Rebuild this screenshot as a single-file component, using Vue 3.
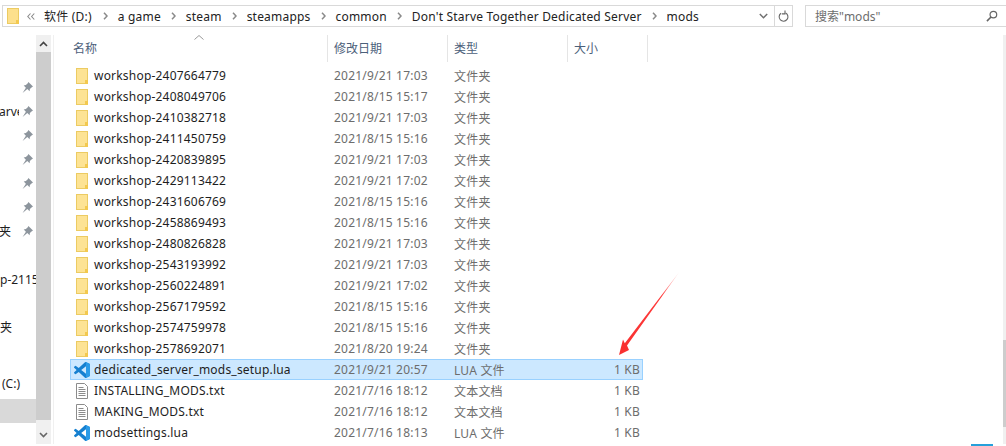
<script setup>
const folders = [
  ['workshop-2407664779', '2021/9/21 17:03'],
  ['workshop-2408049706', '2021/8/15 15:17'],
  ['workshop-2410382718', '2021/9/21 17:03'],
  ['workshop-2411450759', '2021/8/15 15:16'],
  ['workshop-2420839895', '2021/9/21 17:03'],
  ['workshop-2429113422', '2021/9/21 17:02'],
  ['workshop-2431606769', '2021/8/15 15:16'],
  ['workshop-2458869493', '2021/8/15 15:16'],
  ['workshop-2480826828', '2021/9/21 17:03'],
  ['workshop-2543193992', '2021/9/21 17:03'],
  ['workshop-2560224891', '2021/9/21 17:02'],
  ['workshop-2567179592', '2021/8/15 15:16'],
  ['workshop-2574759978', '2021/8/15 15:16'],
  ['workshop-2578692071', '2021/8/20 19:24']
].map(([name, date]) => ({ name, date, type: '文件夹', size: '', icon: 'folder' }))

const files = [
  { name: 'dedicated_server_mods_setup.lua', date: '2021/9/21 20:57', type: 'LUA 文件', size: '1 KB', icon: 'vscode', selected: true },
  { name: 'INSTALLING_MODS.txt', date: '2021/7/16 18:12', type: '文本文档', size: '1 KB', icon: 'text' },
  { name: 'MAKING_MODS.txt', date: '2021/7/16 18:12', type: '文本文档', size: '1 KB', icon: 'text' },
  { name: 'modsettings.lua', date: '2021/7/16 18:13', type: 'LUA 文件', size: '1 KB', icon: 'vscode' }
]

const rows = [...folders, ...files]
const crumbs = ['a game', 'steam', 'steamapps', 'common', "Don't Starve Together Dedicated Server", 'mods']
const columns = [
  { label: '修改日期', width: 120 },
  { label: '类型', width: 120 },
  { label: '大小', width: 80 }
]
const navItems = ['', 'arve', '', '', '', '', '夹']
</script>

<template>
  <div class="window">
    <header class="toolbar">
      <div class="address">
        <svg class="address__folder" width="12" height="16" viewBox="0 0 12 16">
          <rect x="0.5" y="0.5" width="11" height="15" fill="#fde08c" stroke="#eccb62" />
          <rect x="9" y="12" width="3" height="4" fill="#f3c94f" />
        </svg>
        <svg class="chevrons" width="8" height="7" viewBox="0 0 8 7">
          <path d="M3.500.5.800 3.500l2.700 3M7.300.5 4.600 3.500l2.700 3" fill="none" stroke="#8a8a8a" stroke-width="1.100" />
        </svg>
        <span class="crumb crumb--first">软件 (D:)</span>
        <template v-for="crumb in crumbs" :key="crumb">
          <svg class="sep" width="5" height="8" viewBox="0 0 5 8">
            <path d="M1 .8 4 4 1 7.200" fill="none" stroke="#8a8a8a" stroke-width="1.500" />
          </svg>
          <span class="crumb">{{ crumb }}</span>
        </template>
        <span class="address__spacer"></span>
        <svg class="address__drop" width="9" height="6" viewBox="0 0 9 6">
          <path d="M.8 1l3.700 3.700L8.200 1" fill="none" stroke="#707070" stroke-width="1.500" />
        </svg>
        <span class="address__refresh">
          <svg width="11" height="13" viewBox="0 0 11 13">
            <path d="M3 3.200a4.400 4.400 0 1 0 4.600-.3" fill="none" stroke="#666" stroke-width="1.100" />
            <path d="M7 .5v3.400H3.800" fill="none" stroke="#666" stroke-width="1.100" />
          </svg>
        </span>
      </div>
      <div class="search">
        <span>搜索"mods"</span>
        <svg width="12" height="12" viewBox="0 0 13 13">
          <circle cx="8" cy="5" r="3.600" fill="none" stroke="#666" stroke-width="1.300" />
          <path d="M5.400 7.600 1 12" stroke="#666" stroke-width="1.700" />
        </svg>
      </div>
    </header>

    <div class="body">
      <aside class="nav">
        <div class="nav__pane">
          <ul class="nav__pins">
            <li v-for="(item, i) in navItems" :key="i" class="nav__pin">
              <span class="nav__text">{{ item }}</span>
              <svg width="11" height="11" viewBox="0 0 11 11">
                <path d="M6.400 0 11 4.600 9.800 5.200 7.900 7.100 7.600 9.300 5.300 7.100 .6 11 3.900 5.700 1.700 3.400 3.900 3.100 5.800 1.200Z" fill="#8d959d" />
              </svg>
            </li>
          </ul>
          <div class="nav__clip">p-2115</div>
          <div class="nav__clip nav__clip--cn">夹</div>
          <div class="nav__clip nav__clip--drive">(C:)</div>
          <div class="nav__active"></div>
        </div>
        <div class="nav__scroll">
          <span class="nav__arrow">
            <svg width="9" height="6" viewBox="0 0 9 6"><path d="M1 5l3.500-3.500L8 5" fill="none" stroke="#444" stroke-width="1.600" /></svg>
          </span>
          <span class="nav__thumb"></span>
          <span class="nav__arrow nav__arrow--down">
            <svg width="9" height="6" viewBox="0 0 9 6"><path d="M1 1l3.500 3.500L8 1" fill="none" stroke="#666" stroke-width="1.600" /></svg>
          </span>
        </div>
      </aside>

      <main class="list">
        <div class="head">
          <div class="head__col head__col--name">
            <svg class="head__sort" width="10" height="5" viewBox="0 0 10 5"><path d="M.5 4.500 5 .5l4.500 4" fill="none" stroke="#999" /></svg>
            名称
          </div>
          <div v-for="col in columns" :key="col.label" class="head__col" :style="{ width: col.width + 'px' }">{{ col.label }}</div>
        </div>
        <div class="rows">
          <div v-for="row in rows" :key="row.name" class="row" :class="{ 'row--selected': row.selected }">
            <div class="cell cell--name">
              <svg v-if="row.icon === 'folder'" class="icon" width="16" height="16" viewBox="0 0 16 16">
                <rect x="2.500" y="0.500" width="11" height="15" fill="#fde394" stroke="#eccb62" />
                <rect x="11" y="12" width="3" height="4" fill="#f3c94f" />
              </svg>
              <svg v-else-if="row.icon === 'text'" class="icon" width="16" height="16" viewBox="0 0 16 16">
                <path d="M2.500.5h8l3 3v12h-11z" fill="#fff" stroke="#8c8c8c" />
                <path d="M4.500 4.500h5M4.500 6.500h7M4.500 8.500h7M4.500 10.500h7M4.500 12.500h7" stroke="#8c8c8c" />
              </svg>
              <svg v-else class="icon" width="16" height="16" viewBox="0 0 24 24">
                <path d="M23.150 2.587 18.210.21a1.494 1.494 0 0 0-1.705.29l-9.460 8.630-4.120-3.128a.999.999 0 0 0-1.276.057L.327 7.261A1 1 0 0 0 .326 8.740L3.899 12 .326 15.260a1 1 0 0 0 .001 1.479L1.650 17.940a.999.999 0 0 0 1.276.057l4.120-3.128 9.460 8.630a1.492 1.492 0 0 0 1.704.29l4.942-2.377A1.500 1.500 0 0 0 24 20.060V3.939a1.500 1.500 0 0 0-.85-1.352zm-5.146 14.861L10.826 12l7.178-5.448v10.896z" fill="#1680d0" />
                <path d="M18 .1 23.150 2.587A1.500 1.500 0 0 1 24 3.939V20.060a1.500 1.500 0 0 1-.85 1.352L18 23.900V.1Z" fill="#2a9be8" />
              </svg>
              <span class="cell__name">{{ row.name }}</span>
            </div>
            <div class="cell cell--date">{{ row.date }}</div>
            <div class="cell cell--type">{{ row.type }}</div>
            <div class="cell cell--size">{{ row.size }}</div>
          </div>
        </div>
      </main>

      <div class="scroll">
        <span class="scroll__track"></span>
        <span class="scroll__thumb"></span>
        <span class="scroll__end"></span>
      </div>
    </div>

    <footer class="status">
      <span class="status__button"></span>
    </footer>

    <!-- red annotation arrow drawn over the list -->
    <svg class="arrow" width="70" height="90" viewBox="610 268 70 90">
      <defs>
        <linearGradient id="arrow-fade" x1="1" y1="0" x2="0" y2="1">
          <stop offset="0" stop-color="#ff3b3b" stop-opacity="0.05" />
          <stop offset="0.3" stop-color="#ff3b3b" />
          <stop offset="1" stop-color="#f83030" />
        </linearGradient>
      </defs>
      <path d="M680 271 627 345.500 629 350 619 355 623 339.500 624.800 343.200Z" fill="url(#arrow-fade)" />
    </svg>
  </div>
</template>

<style>
html,
body {
  margin: 0;
  background: #fff;
  overflow: hidden;
}
</style>

<style scoped>
.window {
  position: relative;
  width: 1006px;
  height: 446px;
  background: #fff;
  overflow: hidden;
  font-family: "Noto Sans", "Noto Sans CJK SC", sans-serif;
  font-size: 12px;
  color: #1e1e1e;
}

.toolbar {
  display: flex;
  gap: 12px;
  height: 35px;
  padding: 5px 0 0 2px;
  box-sizing: border-box;
}

.address {
  display: flex;
  align-items: center;
  width: 791px;
  height: 22px;
  border: 1px solid #d9d9d9;
  box-sizing: border-box;
  padding-left: 4px;
}

.address__folder {
  margin-right: 8px;
}

.chevrons {
  margin-right: 9px;
}

.crumb {
  color: #222;
  white-space: nowrap;
  letter-spacing: 0.2px;
}

.crumb--first {
  margin-right: 1px;
}

.sep {
  flex: none;
  margin: 0 10px;
}

.address__spacer {
  flex: 1;
}

.address__drop {
  margin-right: 3px;
}

.address__refresh {
  display: flex;
  align-items: center;
  justify-content: center;
  width: 17px;
  height: 100%;
  margin-left: 3px;
  border-left: 1px solid #d9d9d9;
}

.search {
  display: flex;
  align-items: center;
  justify-content: space-between;
  width: 201px;
  height: 22px;
  border: 1px solid #d9d9d9;
  border-right: none;
  box-sizing: border-box;
  padding: 0 8px 0 9px;
  color: #6d6d6d;
}

.body {
  display: flex;
  height: 409px;
}

.nav {
  display: flex;
  width: 54px;
  flex: none;
  border-right: 1px solid #f0f0f0;
  box-sizing: border-box;
}

.nav__pane {
  width: 36px;
  padding-top: 40px;
  overflow: hidden;
}

.nav__pins {
  list-style: none;
  margin: 0;
  padding: 0;
}

.nav__pin {
  display: flex;
  align-items: center;
  justify-content: flex-end;
  height: 24px;
  padding-right: 3px;
}

.nav__text {
  flex: none;
  width: 20px;
  white-space: nowrap;
  overflow: hidden;
  margin-left: -1px;
  margin-right: 3px;
}

.nav__clip {
  white-space: nowrap;
  margin-top: 28px;
  height: 24px;
}

.nav__clip--cn {
  margin-top: 23px;
}

.nav__clip--drive {
  margin-top: 33px;
  padding-left: 2px;
}

.nav__active {
  height: 24px;
  background: #d9d9d9;
}

.nav__scroll {
  display: flex;
  flex-direction: column;
  width: 15px;
  height: 409px;
  background: #f0f0f0;
}

.nav__arrow {
  display: flex;
  align-items: center;
  justify-content: center;
  height: 17px;
}

.nav__arrow--down {
  height: 24px;
  padding-top: 6px;
  box-sizing: border-box;
}

.nav__thumb {
  flex: 1;
  background: #cdcdcd;
}

.list {
  flex: 1;
  min-width: 0;
}

.head {
  display: flex;
  height: 27px;
  color: #4c607a;
}

.head__col {
  position: relative;
  display: flex;
  align-items: center;
  box-sizing: border-box;
  padding-left: 6px;
  padding-bottom: 2px;
  border-right: 1px solid #e5e5e5;
  white-space: nowrap;
}

.head__col--name {
  width: 274px;
  padding-left: 19px;
}

.head__sort {
  position: absolute;
  left: 140px;
  top: 0;
}

.rows {
  padding: 3px 0 0 16px;
  display: flex;
  flex-direction: column;
}

.row {
  display: flex;
  align-items: center;
  width: 573px;
  height: 21px;
  box-sizing: border-box;
  border: 1px solid transparent;
  letter-spacing: 0.2px;
}

.row--selected {
  background: #cce8ff;
  border-color: #99d1ff;
}

.cell {
  white-space: nowrap;
}

.cell--name {
  display: flex;
  align-items: center;
  width: 263px;
  flex: none;
}

.icon {
  flex: none;
  margin-left: 3px;
  margin-right: 4px;
}

.cell__name {
  color: #1e1e1e;
}

.cell--date {
  width: 120px;
  color: #6d6d6d;
  flex: none;
}

.cell--type {
  width: 116px;
  color: #6d6d6d;
  flex: none;
}

.cell--size {
  flex: 1;
  text-align: right;
  padding-right: 2px;
  color: #6d6d6d;
}

.scroll {
  display: flex;
  flex-direction: column;
  width: 3px;
  flex: none;
  margin-left: auto;
}

.scroll__track {
  height: 305px;
  background: #f0f0f0;
}

.scroll__thumb {
  height: 87px;
  background: #cdcdcd;
}

.scroll__end {
  flex: 1;
  background: #f0f0f0;
}

.status {
  height: 2px;
  display: flex;
  justify-content: flex-end;
  padding-right: 13px;
}

.status__button {
  width: 22px;
  height: 2px;
  background: #26a0da;
}

.arrow {
  position: absolute;
  left: 610px;
  top: 268px;
}
</style>
